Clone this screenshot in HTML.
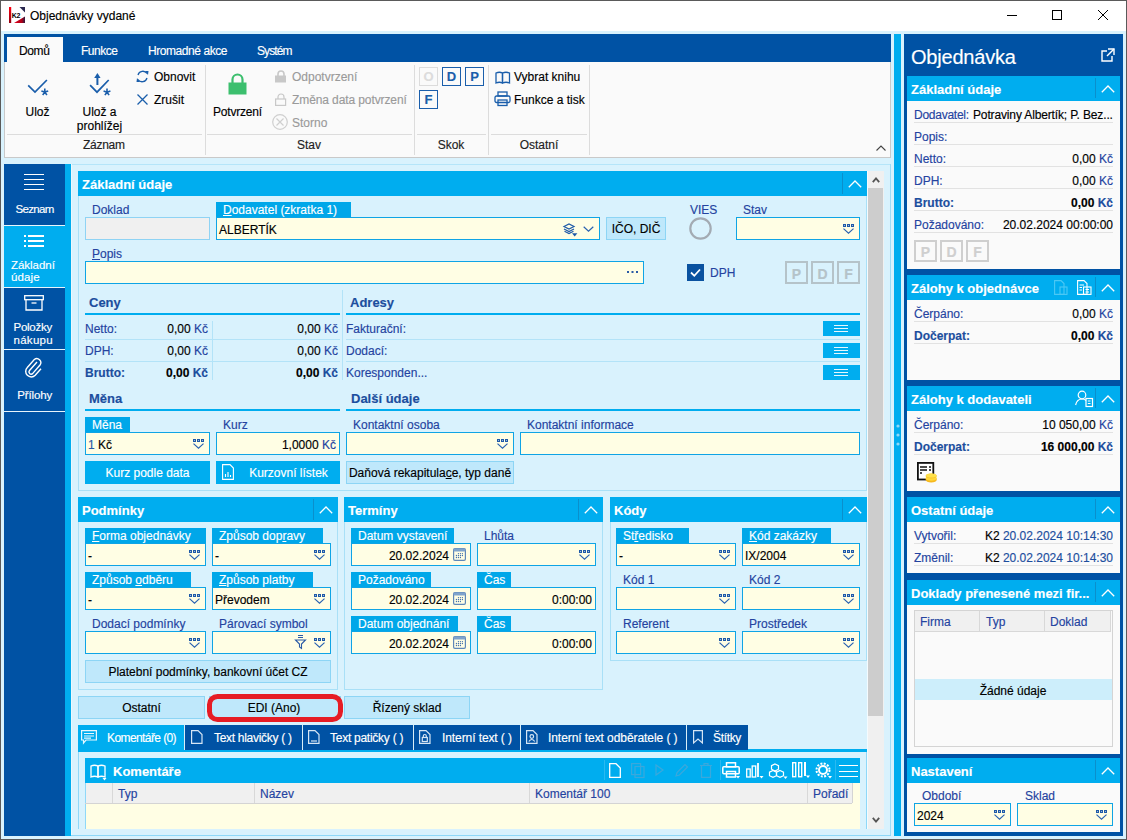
<!DOCTYPE html>
<html><head><meta charset="utf-8">
<style>
*{box-sizing:border-box;margin:0;padding:0}
html,body{width:1127px;height:840px;overflow:hidden;background:#d9f2fd;font-family:"Liberation Sans",sans-serif;font-size:12px;color:#000}
.a{position:absolute}
.t{position:absolute;white-space:nowrap;line-height:14px;-webkit-text-stroke:0.15px currentColor}
.lb{color:#2443a0}
.w{color:#fff}
.g{color:#9a9a9a}
.db{color:#1c4e9e}
svg.a{overflow:visible}
</style></head><body>

<div class="a" style="left:0px;top:0px;width:1127px;height:840px;background:#d9f2fd;"></div>
<div class="a" style="left:1px;top:1px;width:1125px;height:30px;background:#ffffff;"></div>
<div class="a" style="left:0px;top:0px;width:1127px;height:1px;background:#5a5a5a;"></div>
<div class="a" style="left:0px;top:0px;width:1px;height:840px;background:#5a5a5a;"></div>
<div class="a" style="left:1126px;top:0px;width:1px;height:840px;background:#5a5a5a;"></div>
<div class="a" style="left:0px;top:839px;width:1127px;height:1px;background:#5a5a5a;"></div>
<svg class="a" style="left:9px;top:7px;" width="16" height="16" viewBox="0 0 16 16"><defs><linearGradient id="rg" x1="0" y1="0" x2="0" y2="1"><stop offset="0" stop-color="#ff0010"/><stop offset="1" stop-color="#900010"/></linearGradient><linearGradient id="bg2" x1="0" y1="0" x2="1" y2="0"><stop offset="0" stop-color="#e0001a"/><stop offset="0.7" stop-color="#b00018"/><stop offset="1" stop-color="#2a1a40"/></linearGradient></defs><rect x="0" y="0" width="16" height="16" fill="#fff"/><rect x="0" y="0" width="2.2" height="16" fill="url(#rg)"/><path d="M10.5 0 L16 0 L16 5.5 Z" fill="#2b2850"/><path d="M5 16 L16 16 L16 9.5 Z" fill="url(#bg2)"/><text x="2.8" y="11" font-size="7" font-weight="bold" font-family="Liberation Sans" fill="#000" letter-spacing="-0.3">K2</text></svg>
<div class="t " style="left:30px;top:8.8px;font-size:12px;">Objednávky vydané</div>
<div class="a" style="left:1007px;top:15px;width:10px;height:1px;background:#000;"></div>
<div class="a" style="left:1052px;top:10px;width:10px;height:10px;border:1px solid #000;"></div>
<svg class="a" style="left:1098px;top:10px;" width="10" height="10" viewBox="0 0 10 10"><path d="M0 0 L10 10 M10 0 L0 10" stroke="#000" stroke-width="1"/></svg>
<div class="a" style="left:4px;top:34px;width:887px;height:124px;background:#fafafa;border:1px solid #c9c9c9;border-top:none;"></div>
<div class="a" style="left:4px;top:34px;width:887px;height:28px;background:#0052a4;"></div>
<div class="a" style="left:7px;top:37px;width:56px;height:25px;background:#fafafa;"></div>
<div class="t " style="left:19px;top:43.8px;font-size:12px;letter-spacing:-0.4px">Domů</div>
<div class="t w" style="left:81px;top:43.8px;font-size:12px;letter-spacing:-0.5px">Funkce</div>
<div class="t w" style="left:148px;top:43.8px;font-size:12px;letter-spacing:-0.44px">Hromadné akce</div>
<div class="t w" style="left:257px;top:43.8px;font-size:12px;letter-spacing:-0.9px">Systém</div>
<div class="a" style="left:205px;top:65px;width:1px;height:90px;background:#dcdcdc;"></div>
<div class="a" style="left:414px;top:65px;width:1px;height:90px;background:#dcdcdc;"></div>
<div class="a" style="left:488px;top:65px;width:1px;height:90px;background:#dcdcdc;"></div>
<div class="a" style="left:589px;top:65px;width:1px;height:90px;background:#dcdcdc;"></div>
<div class="a" style="left:7px;top:134px;width:195px;height:1px;background:#dcdcdc;"></div>
<div class="a" style="left:207px;top:134px;width:205px;height:1px;background:#dcdcdc;"></div>
<div class="a" style="left:417px;top:134px;width:69px;height:1px;background:#dcdcdc;"></div>
<div class="a" style="left:491px;top:134px;width:96px;height:1px;background:#dcdcdc;"></div>
<div class="t " style="left:83px;top:137.8px;font-size:12px;color:#222;letter-spacing:-0.28px">Záznam</div>
<div class="t " style="left:159.0px;width:300px;text-align:center;top:137.8px;font-size:12px;color:#222;">Stav</div>
<div class="t " style="left:301.0px;width:300px;text-align:center;top:137.8px;font-size:12px;color:#222;">Skok</div>
<div class="t " style="left:389.0px;width:300px;text-align:center;top:137.8px;font-size:12px;color:#222;">Ostatní</div>
<svg class="a" style="left:27px;top:78px;" width="22" height="20" viewBox="0 0 22 20"><path d="M1.2 7.4 L8 14 L19.9 2" fill="none" stroke="#1a5eab" stroke-width="1.7"/><path d="M17.80 14.10 L17.80 10.50 M17.80 14.10 L21.22 12.99 M17.80 14.10 L19.92 17.01 M17.80 14.10 L15.68 17.01 M17.80 14.10 L14.38 12.99 " stroke="#1a5eab" stroke-width="1.6"/></svg>
<div class="t " style="left:-112.5px;width:300px;text-align:center;top:104.8px;font-size:12px;">Ulož</div>
<svg class="a" style="left:88px;top:70px;" width="24" height="28" viewBox="0 0 24 28"><path d="M9.4 7 V15" stroke="#1a5eab" stroke-width="2"/><path d="M6.2 8 L9.4 3 L12.6 8 Z" fill="#1a5eab"/><path d="M2.1 15.1 L9 22.2 L20.7 10" fill="none" stroke="#1a5eab" stroke-width="1.7"/><path d="M19.00 22.20 L19.00 18.60 M19.00 22.20 L22.42 21.09 M19.00 22.20 L21.12 25.11 M19.00 22.20 L16.88 25.11 M19.00 22.20 L15.58 21.09 " stroke="#1a5eab" stroke-width="1.6"/></svg>
<div class="t " style="left:-50.5px;width:300px;text-align:center;top:104.8px;font-size:12px;">Ulož a</div>
<div class="t " style="left:-50.5px;width:300px;text-align:center;top:118.8px;font-size:12px;">prohlížej</div>
<svg class="a" style="left:136px;top:70px;" width="13" height="13" viewBox="0 0 13 13"><g fill="none" stroke="#1a5eab" stroke-width="1.3"><path d="M2 5 A5 5 0 0 1 11 3.5"/><path d="M11 8 A5 5 0 0 1 2 9.5"/></g><path d="M9 1 L12.5 1 L12 5 Z" fill="#1a5eab"/><path d="M4 12 L0.5 12 L1 8 Z" fill="#1a5eab"/></svg>
<div class="t " style="left:154px;top:69.8px;font-size:12px;">Obnovit</div>
<svg class="a" style="left:137px;top:94px;" width="11" height="11" viewBox="0 0 11 11"><path d="M0.5 0.5 L10.5 10.5 M10.5 0.5 L0.5 10.5" stroke="#1a5eab" stroke-width="1.3"/></svg>
<div class="t " style="left:154px;top:92.8px;font-size:12px;">Zrušit</div>
<svg class="a" style="left:228px;top:74px;" width="19" height="21" viewBox="0 0 19 21"><path d="M4.5 9 V5.5 A5 5 0 0 1 14.5 5.5 V9" fill="none" stroke="#3cbf6e" stroke-width="2.2"/><rect x="0.5" y="8.5" width="18" height="12" fill="#3cbf6e"/></svg>
<div class="t " style="left:213px;top:104.8px;font-size:12px;letter-spacing:-0.19px">Potvrzení</div>
<svg class="a" style="left:275px;top:70px;" width="12" height="13" viewBox="0 0 12 13"><path d="M3 6 V4 A3 3 0 0 1 9 4 V6" fill="none" stroke="#c8c8c8" stroke-width="1.6"/><rect x="0" y="5.5" width="11" height="7" fill="#c8c8c8"/></svg>
<div class="t g" style="left:292px;top:69.8px;font-size:12px;">Odpotvrzení</div>
<svg class="a" style="left:275px;top:93px;" width="12" height="13" viewBox="0 0 12 13"><path d="M3 6 V4 A3 3 0 0 1 9 4 V6" fill="none" stroke="#c8c8c8" stroke-width="1.2"/><rect x="0.6" y="6" width="10" height="6.4" fill="none" stroke="#c8c8c8" stroke-width="1.2"/></svg>
<div class="t g" style="left:292px;top:92.8px;font-size:12px;letter-spacing:-0.1px">Změna data potvrzení</div>
<svg class="a" style="left:272px;top:114px;" width="17" height="17" viewBox="0 0 17 17"><circle cx="8" cy="8" r="7.3" fill="none" stroke="#cfcfcf" stroke-width="1.2"/><path d="M4.5 4.5 L11.5 11.5 M11.5 4.5 L4.5 11.5" stroke="#cfcfcf" stroke-width="1.2"/></svg>
<div class="t g" style="left:292px;top:115.8px;font-size:12px;">Storno</div>
<div class="a" style="left:419px;top:67px;width:19px;height:19px;border:1px solid #dcdcdc;"></div>
<div class="t " style="left:278.5px;width:300px;text-align:center;top:70.0px;font-size:13px;font-weight:bold;color:#dcdcdc;">O</div>
<div class="a" style="left:442px;top:67px;width:19px;height:19px;border:1.5px solid #1a5eab;"></div>
<div class="t " style="left:301.5px;width:300px;text-align:center;top:70.0px;font-size:13px;font-weight:bold;color:#1a5eab;">D</div>
<div class="a" style="left:465px;top:67px;width:19px;height:19px;border:1.5px solid #1a5eab;"></div>
<div class="t " style="left:324.5px;width:300px;text-align:center;top:70.0px;font-size:13px;font-weight:bold;color:#1a5eab;">P</div>
<div class="a" style="left:419px;top:90px;width:19px;height:19px;border:1.5px solid #1a5eab;"></div>
<div class="t " style="left:278.5px;width:300px;text-align:center;top:93.0px;font-size:13px;font-weight:bold;color:#1a5eab;">F</div>
<svg class="a" style="left:495px;top:71px;" width="16" height="13" viewBox="0 0 16 13"><g fill="none" stroke="#1a5eab" stroke-width="1.3"><path d="M1 2 Q4.5 0.5 7.5 2 V12 Q4.5 10.5 1 12 Z"/><path d="M7.5 2 Q11 0.5 14.5 2 V12 Q11 10.5 7.5 12 Z"/></g></svg>
<div class="t " style="left:514px;top:69.8px;font-size:12px;">Vybrat knihu</div>
<svg class="a" style="left:494px;top:91px;" width="17" height="16" viewBox="0 0 17 16"><g fill="none" stroke="#1a5eab" stroke-width="1.3"><rect x="4" y="1" width="9" height="4"/><rect x="1" y="5" width="15" height="6.5" rx="1.5"/><rect x="4" y="9" width="9" height="5.5"/></g></svg>
<div class="t " style="left:514px;top:92.8px;font-size:12px;">Funkce a tisk</div>
<svg class="a" style="left:876px;top:145px;" width="10" height="6" viewBox="0 0 10 6"><path d="M0.5 5.5 L5 1 L9.5 5.5" fill="none" stroke="#444" stroke-width="1.1"/></svg>
<div class="a" style="left:894px;top:34px;width:7px;height:802px;background:#00adef;"></div>
<svg class="a" style="left:896px;top:424px;" width="4" height="4" viewBox="0 0 4 4"><circle cx="2" cy="2" r="1.6" fill="#8fd8f8"/></svg>
<svg class="a" style="left:896px;top:433px;" width="4" height="4" viewBox="0 0 4 4"><circle cx="2" cy="2" r="1.6" fill="#8fd8f8"/></svg>
<svg class="a" style="left:896px;top:442px;" width="4" height="4" viewBox="0 0 4 4"><circle cx="2" cy="2" r="1.6" fill="#8fd8f8"/></svg>
<div class="a" style="left:904px;top:34px;width:219px;height:802px;background:#0052a4;"></div>
<div class="t w" style="left:911px;top:50.1px;font-size:20px;letter-spacing:-0.2px">Objednávka</div>
<svg class="a" style="left:1101px;top:48px;" width="14" height="14" viewBox="0 0 14 14"><g fill="none" stroke="#fff" stroke-width="1.4"><path d="M6 3 H1 V13 H11 V8"/><path d="M7 1 H13 V7"/><path d="M13 1 L6 8"/></g></svg>
<div class="a" style="left:4px;top:164px;width:61px;height:672px;background:#0052a4;"></div>
<div class="a" style="left:65px;top:164px;width:6px;height:672px;background:#00adef;"></div>
<div class="a" style="left:4px;top:226px;width:67px;height:61px;background:#00adef;"></div>
<div class="a" style="left:4px;top:225px;width:61px;height:1px;background:#e8f4fb;"></div>
<div class="a" style="left:4px;top:287px;width:61px;height:1px;background:#e8f4fb;"></div>
<div class="a" style="left:4px;top:349px;width:61px;height:1px;background:#e8f4fb;"></div>
<div class="a" style="left:4px;top:411px;width:61px;height:1px;background:#e8f4fb;"></div>
<div class="a" style="left:24px;top:174px;width:20px;height:1px;background:#fff;"></div>
<div class="a" style="left:24px;top:179px;width:20px;height:1px;background:#fff;"></div>
<div class="a" style="left:24px;top:184px;width:20px;height:1px;background:#fff;"></div>
<div class="a" style="left:24px;top:189px;width:20px;height:1px;background:#fff;"></div>
<div class="t w" style="left:15.5px;top:202.0px;font-size:11.5px;letter-spacing:-0.67px">Seznam</div>
<div class="a" style="left:24px;top:235px;width:1.5px;height:1.5px;background:#fff;"></div>
<div class="a" style="left:28px;top:235px;width:16px;height:1.5px;background:#fff;"></div>
<div class="a" style="left:24px;top:240px;width:1.5px;height:1.5px;background:#fff;"></div>
<div class="a" style="left:28px;top:240px;width:16px;height:1.5px;background:#fff;"></div>
<div class="a" style="left:24px;top:245px;width:1.5px;height:1.5px;background:#fff;"></div>
<div class="a" style="left:28px;top:245px;width:16px;height:1.5px;background:#fff;"></div>
<div class="t w" style="left:11px;top:258.0px;font-size:11.5px;letter-spacing:-0.03px">Základní</div>
<div class="t w" style="left:11px;top:270.0px;font-size:11.5px;letter-spacing:0.13px">údaje</div>
<svg class="a" style="left:24px;top:295px;" width="20" height="16" viewBox="0 0 20 16"><g fill="none" stroke="#fff" stroke-width="1.3"><rect x="0.7" y="0.7" width="18.6" height="4"/><path d="M2 4.7 V15 H18 V4.7"/><path d="M7.5 8 H12.5"/></g></svg>
<div class="t w" style="left:13.5px;top:320.0px;font-size:11.5px;letter-spacing:-0.26px">Položky</div>
<div class="t w" style="left:13.5px;top:333.0px;font-size:11.5px;letter-spacing:0.28px">nákupu</div>
<svg class="a" style="left:25px;top:358px;" width="18" height="20" viewBox="0 0 18 20"><path d="M12 4 L4.5 12.5 A2.2 2.2 0 0 0 7.6 15.6 L15 7 A4 4 0 0 0 9.3 1.5 L2.3 9.5 A5.5 5.5 0 0 0 10.2 17.3 L16 10.8" fill="none" stroke="#fff" stroke-width="1.4"/></svg>
<div class="t w" style="left:17.3px;top:388.0px;font-size:11.5px;letter-spacing:-0.14px">Přílohy</div>
<div class="a" style="left:71px;top:164px;width:820px;height:672px;background:#d9f2fd;"></div>
<div class="a" style="left:71px;top:164px;width:820px;height:1px;background:#b5e5f9;"></div>
<div class="a" style="left:890px;top:164px;width:1px;height:672px;background:#9edcf6;"></div>
<div class="a" style="left:71px;top:835px;width:820px;height:1px;background:#8fd8f8;"></div>
<div class="a" style="left:71px;top:164px;width:1px;height:671px;background:#eaf8fe;"></div>
<div class="a" style="left:867px;top:171px;width:1px;height:658px;background:#f4fbfe;"></div>
<div class="a" style="left:868px;top:171px;width:16px;height:658px;background:#f0f0f0;"></div>
<div class="a" style="left:868px;top:188px;width:15px;height:528px;background:#cdcdcd;"></div>
<svg class="a" style="left:872px;top:177px;" width="8" height="6" viewBox="0 0 8 6"><path d="M0.8 5.2 L4 1.5 L7.2 5.2" fill="none" stroke="#555" stroke-width="1.8"/></svg>
<svg class="a" style="left:872px;top:817px;" width="8" height="6" viewBox="0 0 8 6"><path d="M0.8 0.8 L4 4.5 L7.2 0.8" fill="none" stroke="#555" stroke-width="1.8"/></svg>
<div class="a" style="left:78px;top:171px;width:789px;height:320px;border:1px solid #a9e0f7;"></div>
<div class="a" style="left:78px;top:171px;width:789px;height:25px;background:#00adef;"></div>
<div class="t w" style="left:82px;top:177.5px;font-size:13px;font-weight:bold;">Základní údaje</div>
<div class="a" style="left:842px;top:173px;width:1px;height:21px;background:#0a8fcc;"></div>
<svg class="a" style="left:848px;top:180px;" width="14" height="8" viewBox="0 0 14 8"><path d="M0.8 7.2 L7 1 L13.2 7.2" fill="none" stroke="#fff" stroke-width="1.3"/></svg>
<div class="t lb" style="left:92px;top:202.8px;font-size:12px;">Doklad</div>
<div class="a" style="left:85px;top:217px;width:125px;height:23px;background:#f0f0f0;border:1px solid #8fd3f4;"></div>
<div class="a" style="left:216px;top:202px;width:135px;height:15px;background:#00a7e9;"></div>
<div class="t w" style="left:223px;top:202.8px;font-size:12px;"><u>D</u>odavatel (zkratka 1)</div>
<div class="a" style="left:216px;top:217px;width:384px;height:23px;background:#fffee4;border:1px solid #0fa4e5;"></div>
<div class="t " style="left:219px;top:222.8px;font-size:12px;">ALBERTÍK</div>
<svg class="a" style="left:563px;top:223px;" width="15" height="14" viewBox="0 0 15 14"><g fill="none" stroke="#1f5aa8" stroke-width="1.2"><path d="M1 3.5 L6 1 L11 3.5 L6 6 Z"/><path d="M1 6 L6 8.5 L11 6"/><path d="M1.5 8.3 L6 10.5 L10.5 8.3"/></g><path d="M9 10.3 L14.4 10.3 L11.7 13.5 Z" fill="#1f5aa8"/></svg>
<svg class="a" style="left:583px;top:226px;" width="11" height="6" viewBox="0 0 11 6"><path d="M0.7 0.7 L5.5 5.2 L10.3 0.7" fill="none" stroke="#2a62b0" stroke-width="1.2"/></svg>
<div class="a" style="left:606px;top:217px;width:60px;height:23px;background:#bfe8fb;border:1px solid #8dd5f5;"></div>
<div class="t " style="left:486.0px;width:300px;text-align:center;top:221.8px;font-size:12px;">IČO, DIČ</div>
<div class="t lb" style="left:690px;top:202.8px;font-size:12px;">VIES</div>
<svg class="a" style="left:689px;top:217px;" width="23" height="23" viewBox="0 0 23 23"><circle cx="11.5" cy="11.5" r="10.2" fill="none" stroke="#a3abb3" stroke-width="2.2"/></svg>
<div class="t lb" style="left:743px;top:202.8px;font-size:12px;">Stav</div>
<div class="a" style="left:736px;top:217px;width:124px;height:23px;background:#fffee4;border:1px solid #0fa4e5;"></div>
<svg class="a" style="left:843px;top:224px;" width="12" height="10" viewBox="0 0 12 10"><g fill="#1f5aa8"><rect x="0" y="0" width="3" height="3"/><rect x="4" y="0" width="3" height="3"/><rect x="8" y="0" width="3" height="3"/></g><g fill="#9cb8dc"><rect x="1" y="1" width="1" height="1"/><rect x="5" y="1" width="1" height="1"/><rect x="9" y="1" width="1" height="1"/></g><path d="M0.5 4.6 L5.5 9.2 L10.5 4.6" fill="none" stroke="#2a62b0" stroke-width="1.15"/></svg>
<div class="t lb" style="left:92px;top:246.8px;font-size:12px;"><u>P</u>opis</div>
<div class="a" style="left:85px;top:261px;width:559px;height:23px;background:#fffee4;border:1px solid #0fa4e5;"></div>
<svg class="a" style="left:627px;top:271px;" width="12" height="3" viewBox="0 0 12 3"><g fill="#2a5aa6"><rect x="0" y="0" width="2" height="2"/><rect x="4.5" y="0" width="2" height="2"/><rect x="9" y="0" width="2" height="2"/></g></svg>
<div class="a" style="left:687px;top:264px;width:17px;height:17px;background:#0a52a0;"></div>
<svg class="a" style="left:689px;top:266px;" width="13" height="13" viewBox="0 0 13 13"><path d="M2 6.5 L5.3 9.8 L11 3.5" fill="none" stroke="#fff" stroke-width="1.8"/></svg>
<div class="t lb" style="left:710px;top:265.8px;font-size:12px;">DPH</div>
<div class="a" style="left:785px;top:261px;width:23px;height:23px;border:2px solid #b5c3c9;"></div>
<div class="t " style="left:646.5px;width:300px;text-align:center;top:267.1px;font-size:14px;font-weight:bold;color:#b5c3c9;">P</div>
<div class="a" style="left:811px;top:261px;width:23px;height:23px;border:2px solid #b5c3c9;"></div>
<div class="t " style="left:672.5px;width:300px;text-align:center;top:267.1px;font-size:14px;font-weight:bold;color:#b5c3c9;">D</div>
<div class="a" style="left:837px;top:261px;width:23px;height:23px;border:2px solid #b5c3c9;"></div>
<div class="t " style="left:698.5px;width:300px;text-align:center;top:267.1px;font-size:14px;font-weight:bold;color:#b5c3c9;">F</div>
<div class="t " style="left:89px;top:295.5px;font-size:13px;font-weight:bold;color:#1c4e9e;">Ceny</div>
<div class="a" style="left:85px;top:313px;width:255px;height:2px;background:#00adef;"></div>
<div class="a" style="left:85px;top:339px;width:255px;height:1px;background:#b3e3f8;"></div>
<div class="a" style="left:85px;top:361px;width:255px;height:1px;background:#b3e3f8;"></div>
<div class="a" style="left:212px;top:321px;width:1px;height:59px;background:#b3e3f8;"></div>
<div class="a" style="left:342px;top:290px;width:1px;height:90px;background:#b3e3f8;"></div>
<div class="t lb" style="left:85px;top:321.8px;font-size:12px;">Netto:</div>
<div class="t lb" style="left:85px;top:343.8px;font-size:12px;">DPH:</div>
<div class="t " style="left:85px;top:365.8px;font-size:12px;font-weight:bold;color:#1c4e9e;">Brutto:</div>
<div class="t " style="right:919px;top:321.8px;font-size:12px;"><span style="color:#000">0,00</span> <span style="color:#2443a0">Kč</span></div>
<div class="t " style="right:789px;top:321.8px;font-size:12px;"><span style="color:#000">0,00</span> <span style="color:#2443a0">Kč</span></div>
<div class="t " style="right:919px;top:343.8px;font-size:12px;"><span style="color:#000">0,00</span> <span style="color:#2443a0">Kč</span></div>
<div class="t " style="right:789px;top:343.8px;font-size:12px;"><span style="color:#000">0,00</span> <span style="color:#2443a0">Kč</span></div>
<div class="t " style="right:919px;top:365.8px;font-size:12px;font-weight:bold;"><span style="color:#000">0,00</span> <span style="color:#1c4e9e">Kč</span></div>
<div class="t " style="right:789px;top:365.8px;font-size:12px;font-weight:bold;"><span style="color:#000">0,00</span> <span style="color:#1c4e9e">Kč</span></div>
<div class="t " style="left:350px;top:295.5px;font-size:13px;font-weight:bold;color:#1c4e9e;">Adresy</div>
<div class="a" style="left:346px;top:313px;width:514px;height:2px;background:#00adef;"></div>
<div class="a" style="left:346px;top:339px;width:514px;height:1px;background:#b3e3f8;"></div>
<div class="a" style="left:346px;top:361px;width:514px;height:1px;background:#b3e3f8;"></div>
<div class="t lb" style="left:346px;top:321.8px;font-size:12px;">Fakturační:</div>
<div class="t lb" style="left:346px;top:343.8px;font-size:12px;">Dodací:</div>
<div class="t lb" style="left:346px;top:365.8px;font-size:12px;">Koresponden...</div>
<div class="a" style="left:823px;top:321px;width:37px;height:15px;background:#00adef;"></div>
<div class="a" style="left:834px;top:325px;width:14px;height:1px;background:#e6f7fe;"></div>
<div class="a" style="left:834px;top:328px;width:14px;height:1px;background:#e6f7fe;"></div>
<div class="a" style="left:834px;top:331px;width:14px;height:1px;background:#e6f7fe;"></div>
<div class="a" style="left:823px;top:343px;width:37px;height:15px;background:#00adef;"></div>
<div class="a" style="left:834px;top:347px;width:14px;height:1px;background:#e6f7fe;"></div>
<div class="a" style="left:834px;top:350px;width:14px;height:1px;background:#e6f7fe;"></div>
<div class="a" style="left:834px;top:353px;width:14px;height:1px;background:#e6f7fe;"></div>
<div class="a" style="left:823px;top:365px;width:37px;height:15px;background:#00adef;"></div>
<div class="a" style="left:834px;top:369px;width:14px;height:1px;background:#e6f7fe;"></div>
<div class="a" style="left:834px;top:372px;width:14px;height:1px;background:#e6f7fe;"></div>
<div class="a" style="left:834px;top:375px;width:14px;height:1px;background:#e6f7fe;"></div>
<div class="t " style="left:89px;top:391.5px;font-size:13px;font-weight:bold;color:#1c4e9e;">Měna</div>
<div class="a" style="left:85px;top:409px;width:255px;height:2px;background:#00adef;"></div>
<div class="a" style="left:85px;top:417px;width:45px;height:15px;background:#00a7e9;"></div>
<div class="t w" style="left:92px;top:417.8px;font-size:12px;">Měna</div>
<div class="a" style="left:85px;top:432px;width:125px;height:23px;background:#fffee4;border:1px solid #0fa4e5;"></div>
<div class="t " style="left:88px;top:437.8px;font-size:12px;"><span style="color:#2a5aa6">1</span> Kč</div>
<svg class="a" style="left:193px;top:439px;" width="12" height="10" viewBox="0 0 12 10"><g fill="#1f5aa8"><rect x="0" y="0" width="3" height="3"/><rect x="4" y="0" width="3" height="3"/><rect x="8" y="0" width="3" height="3"/></g><g fill="#9cb8dc"><rect x="1" y="1" width="1" height="1"/><rect x="5" y="1" width="1" height="1"/><rect x="9" y="1" width="1" height="1"/></g><path d="M0.5 4.6 L5.5 9.2 L10.5 4.6" fill="none" stroke="#2a62b0" stroke-width="1.15"/></svg>
<div class="t lb" style="left:223px;top:417.8px;font-size:12px;">Kurz</div>
<div class="a" style="left:216px;top:432px;width:124px;height:23px;background:#fffee4;border:1px solid #0fa4e5;"></div>
<div class="t " style="right:791px;top:437.8px;font-size:12px;">1,0000 <span style="color:#2443a0">Kč</span></div>
<div class="a" style="left:85px;top:461px;width:125px;height:23px;background:#00adef;"></div>
<div class="t w" style="left:-2.5px;width:300px;text-align:center;top:465.8px;font-size:12px;">Kurz podle data</div>
<div class="a" style="left:216px;top:461px;width:124px;height:23px;background:#00adef;"></div>
<svg class="a" style="left:222px;top:464px;" width="12" height="16" viewBox="0 0 12 16"><g fill="none" stroke="#fff" stroke-width="1.1"><path d="M0.6 0.6 H8 L11.4 4 V15.4 H0.6 Z"/><path d="M3.5 13 V10 M6 13 V8 M8.5 13 V11"/></g></svg>
<div class="t w" style="left:138.5px;width:300px;text-align:center;top:465.8px;font-size:12px;">Kurzovní lístek</div>
<div class="t " style="left:351px;top:391.5px;font-size:13px;font-weight:bold;color:#1c4e9e;">Další údaje</div>
<div class="a" style="left:346px;top:409px;width:514px;height:2px;background:#00adef;"></div>
<div class="t lb" style="left:353px;top:417.8px;font-size:12px;">Kontaktní osoba</div>
<div class="a" style="left:346px;top:432px;width:168px;height:23px;background:#fffee4;border:1px solid #0fa4e5;"></div>
<svg class="a" style="left:497px;top:439px;" width="12" height="10" viewBox="0 0 12 10"><g fill="#1f5aa8"><rect x="0" y="0" width="3" height="3"/><rect x="4" y="0" width="3" height="3"/><rect x="8" y="0" width="3" height="3"/></g><g fill="#9cb8dc"><rect x="1" y="1" width="1" height="1"/><rect x="5" y="1" width="1" height="1"/><rect x="9" y="1" width="1" height="1"/></g><path d="M0.5 4.6 L5.5 9.2 L10.5 4.6" fill="none" stroke="#2a62b0" stroke-width="1.15"/></svg>
<div class="t lb" style="left:527px;top:417.8px;font-size:12px;">Kontaktní informace</div>
<div class="a" style="left:520px;top:432px;width:340px;height:23px;background:#fffee4;border:1px solid #0fa4e5;"></div>
<div class="a" style="left:346px;top:461px;width:168px;height:23px;background:#bfe8fb;border:1px solid #8dd5f5;"></div>
<div class="t " style="left:280.0px;width:300px;text-align:center;top:465.8px;font-size:12px;">Daňová rekapitula<u>c</u>e, typ daně</div>
<div class="a" style="left:78px;top:497px;width:260px;height:193px;border:1px solid #a9e0f7;"></div>
<div class="a" style="left:78px;top:497px;width:260px;height:25px;background:#00adef;"></div>
<div class="t w" style="left:82px;top:503.5px;font-size:13px;font-weight:bold;">Podmínky</div>
<div class="a" style="left:313px;top:499px;width:1px;height:21px;background:#0a8fcc;"></div>
<svg class="a" style="left:319px;top:506px;" width="14" height="8" viewBox="0 0 14 8"><path d="M0.8 7.2 L7 1 L13.2 7.2" fill="none" stroke="#fff" stroke-width="1.3"/></svg>
<div class="a" style="left:85px;top:528px;width:121px;height:15px;background:#00a7e9;"></div>
<div class="t w" style="left:92px;top:528.8px;font-size:12px;"><u>F</u>orma objednávky</div>
<div class="a" style="left:85px;top:543px;width:121px;height:23px;background:#fffee4;border:1px solid #0fa4e5;"></div>
<div class="t " style="left:88px;top:548.8px;font-size:12px;">-</div>
<svg class="a" style="left:189px;top:550px;" width="12" height="10" viewBox="0 0 12 10"><g fill="#1f5aa8"><rect x="0" y="0" width="3" height="3"/><rect x="4" y="0" width="3" height="3"/><rect x="8" y="0" width="3" height="3"/></g><g fill="#9cb8dc"><rect x="1" y="1" width="1" height="1"/><rect x="5" y="1" width="1" height="1"/><rect x="9" y="1" width="1" height="1"/></g><path d="M0.5 4.6 L5.5 9.2 L10.5 4.6" fill="none" stroke="#2a62b0" stroke-width="1.15"/></svg>
<div class="a" style="left:212px;top:528px;width:111px;height:15px;background:#00a7e9;"></div>
<div class="t w" style="left:219px;top:528.8px;font-size:12px;">Způsob dop<u>r</u>avy</div>
<div class="a" style="left:212px;top:543px;width:119px;height:23px;background:#fffee4;border:1px solid #0fa4e5;"></div>
<div class="t " style="left:215px;top:548.8px;font-size:12px;">-</div>
<svg class="a" style="left:314px;top:550px;" width="12" height="10" viewBox="0 0 12 10"><g fill="#1f5aa8"><rect x="0" y="0" width="3" height="3"/><rect x="4" y="0" width="3" height="3"/><rect x="8" y="0" width="3" height="3"/></g><g fill="#9cb8dc"><rect x="1" y="1" width="1" height="1"/><rect x="5" y="1" width="1" height="1"/><rect x="9" y="1" width="1" height="1"/></g><path d="M0.5 4.6 L5.5 9.2 L10.5 4.6" fill="none" stroke="#2a62b0" stroke-width="1.15"/></svg>
<div class="a" style="left:85px;top:572px;width:106px;height:15px;background:#00a7e9;"></div>
<div class="t w" style="left:92px;top:572.8px;font-size:12px;">Způsob <u>o</u>dběru</div>
<div class="a" style="left:85px;top:587px;width:121px;height:23px;background:#fffee4;border:1px solid #0fa4e5;"></div>
<div class="t " style="left:88px;top:592.8px;font-size:12px;">-</div>
<svg class="a" style="left:189px;top:594px;" width="12" height="10" viewBox="0 0 12 10"><g fill="#1f5aa8"><rect x="0" y="0" width="3" height="3"/><rect x="4" y="0" width="3" height="3"/><rect x="8" y="0" width="3" height="3"/></g><g fill="#9cb8dc"><rect x="1" y="1" width="1" height="1"/><rect x="5" y="1" width="1" height="1"/><rect x="9" y="1" width="1" height="1"/></g><path d="M0.5 4.6 L5.5 9.2 L10.5 4.6" fill="none" stroke="#2a62b0" stroke-width="1.15"/></svg>
<div class="a" style="left:212px;top:572px;width:101px;height:15px;background:#00a7e9;"></div>
<div class="t w" style="left:219px;top:572.8px;font-size:12px;"><u>Z</u>působ platby</div>
<div class="a" style="left:212px;top:587px;width:119px;height:23px;background:#fffee4;border:1px solid #0fa4e5;"></div>
<div class="t " style="left:215px;top:592.8px;font-size:12px;">Převodem</div>
<svg class="a" style="left:314px;top:594px;" width="12" height="10" viewBox="0 0 12 10"><g fill="#1f5aa8"><rect x="0" y="0" width="3" height="3"/><rect x="4" y="0" width="3" height="3"/><rect x="8" y="0" width="3" height="3"/></g><g fill="#9cb8dc"><rect x="1" y="1" width="1" height="1"/><rect x="5" y="1" width="1" height="1"/><rect x="9" y="1" width="1" height="1"/></g><path d="M0.5 4.6 L5.5 9.2 L10.5 4.6" fill="none" stroke="#2a62b0" stroke-width="1.15"/></svg>
<div class="t lb" style="left:92px;top:616.8px;font-size:12px;">Dodací podmínky</div>
<div class="a" style="left:85px;top:631px;width:121px;height:23px;background:#fffee4;border:1px solid #0fa4e5;"></div>
<svg class="a" style="left:189px;top:638px;" width="12" height="10" viewBox="0 0 12 10"><g fill="#1f5aa8"><rect x="0" y="0" width="3" height="3"/><rect x="4" y="0" width="3" height="3"/><rect x="8" y="0" width="3" height="3"/></g><g fill="#9cb8dc"><rect x="1" y="1" width="1" height="1"/><rect x="5" y="1" width="1" height="1"/><rect x="9" y="1" width="1" height="1"/></g><path d="M0.5 4.6 L5.5 9.2 L10.5 4.6" fill="none" stroke="#2a62b0" stroke-width="1.15"/></svg>
<div class="t lb" style="left:219px;top:616.8px;font-size:12px;">Párovací symbol</div>
<div class="a" style="left:212px;top:631px;width:119px;height:23px;background:#fffee4;border:1px solid #0fa4e5;"></div>
<svg class="a" style="left:314px;top:638px;" width="12" height="10" viewBox="0 0 12 10"><g fill="#1f5aa8"><rect x="0" y="0" width="3" height="3"/><rect x="4" y="0" width="3" height="3"/><rect x="8" y="0" width="3" height="3"/></g><g fill="#9cb8dc"><rect x="1" y="1" width="1" height="1"/><rect x="5" y="1" width="1" height="1"/><rect x="9" y="1" width="1" height="1"/></g><path d="M0.5 4.6 L5.5 9.2 L10.5 4.6" fill="none" stroke="#2a62b0" stroke-width="1.15"/></svg>
<svg class="a" style="left:295px;top:635px;" width="11" height="14" viewBox="0 0 11 14"><g fill="none" stroke="#2a5aa6" stroke-width="1.1"><path d="M3 0.5 H8 M3 2.5 H8"/><path d="M0.5 5 H10.5 L6.5 9 V13.5 L4.5 12 V9 Z"/></g></svg>
<div class="a" style="left:85px;top:660px;width:246px;height:23px;background:#bfe8fb;border:1px solid #8dd5f5;"></div>
<div class="t " style="left:58.0px;width:300px;text-align:center;top:664.8px;font-size:12px;">Platební podmínky, bankovní účet CZ</div>
<div class="a" style="left:344px;top:497px;width:259px;height:193px;border:1px solid #a9e0f7;"></div>
<div class="a" style="left:344px;top:497px;width:259px;height:25px;background:#00adef;"></div>
<div class="t w" style="left:348px;top:503.5px;font-size:13px;font-weight:bold;">Termíny</div>
<div class="a" style="left:578px;top:499px;width:1px;height:21px;background:#0a8fcc;"></div>
<svg class="a" style="left:584px;top:506px;" width="14" height="8" viewBox="0 0 14 8"><path d="M0.8 7.2 L7 1 L13.2 7.2" fill="none" stroke="#fff" stroke-width="1.3"/></svg>
<div class="a" style="left:351px;top:528px;width:103px;height:15px;background:#00a7e9;"></div>
<div class="t w" style="left:358px;top:528.8px;font-size:12px;">Datum vystavení</div>
<div class="a" style="left:351px;top:543px;width:120px;height:23px;background:#fffee4;border:1px solid #0fa4e5;"></div>
<div class="t " style="right:678px;top:548.8px;font-size:12px;">20.02.2024</div>
<svg class="a" style="left:453px;top:548px;" width="13" height="13" viewBox="0 0 13 13"><rect x="0.6" y="0.6" width="11.8" height="11.8" rx="1.3" fill="none" stroke="#5f88b8" stroke-width="1.2"/><rect x="0.6" y="0.6" width="11.8" height="3" rx="1" fill="#7fa3cc"/><g fill="#3f6faa"><circle cx="5.4" cy="5.6" r="0.65"/><circle cx="7.4" cy="5.6" r="0.65"/><circle cx="9.4" cy="5.6" r="0.65"/><circle cx="3.4" cy="7.5" r="0.65"/><circle cx="5.4" cy="7.5" r="0.65"/><circle cx="7.4" cy="7.5" r="0.65"/><circle cx="9.4" cy="7.5" r="0.65"/><circle cx="3.4" cy="9.5" r="0.65"/><circle cx="5.4" cy="9.5" r="0.65"/><circle cx="7.4" cy="9.5" r="0.65"/></g></svg>
<div class="t lb" style="left:484px;top:528.8px;font-size:12px;">Lhůta</div>
<div class="a" style="left:477px;top:543px;width:119px;height:23px;background:#fffee4;border:1px solid #0fa4e5;"></div>
<svg class="a" style="left:579px;top:550px;" width="12" height="10" viewBox="0 0 12 10"><g fill="#1f5aa8"><rect x="0" y="0" width="3" height="3"/><rect x="4" y="0" width="3" height="3"/><rect x="8" y="0" width="3" height="3"/></g><g fill="#9cb8dc"><rect x="1" y="1" width="1" height="1"/><rect x="5" y="1" width="1" height="1"/><rect x="9" y="1" width="1" height="1"/></g><path d="M0.5 4.6 L5.5 9.2 L10.5 4.6" fill="none" stroke="#2a62b0" stroke-width="1.15"/></svg>
<div class="a" style="left:351px;top:572px;width:80px;height:15px;background:#00a7e9;"></div>
<div class="t w" style="left:358px;top:572.8px;font-size:12px;">Požadováno</div>
<div class="a" style="left:351px;top:587px;width:120px;height:23px;background:#fffee4;border:1px solid #0fa4e5;"></div>
<div class="t " style="right:678px;top:592.8px;font-size:12px;">20.02.2024</div>
<svg class="a" style="left:453px;top:592px;" width="13" height="13" viewBox="0 0 13 13"><rect x="0.6" y="0.6" width="11.8" height="11.8" rx="1.3" fill="none" stroke="#5f88b8" stroke-width="1.2"/><rect x="0.6" y="0.6" width="11.8" height="3" rx="1" fill="#7fa3cc"/><g fill="#3f6faa"><circle cx="5.4" cy="5.6" r="0.65"/><circle cx="7.4" cy="5.6" r="0.65"/><circle cx="9.4" cy="5.6" r="0.65"/><circle cx="3.4" cy="7.5" r="0.65"/><circle cx="5.4" cy="7.5" r="0.65"/><circle cx="7.4" cy="7.5" r="0.65"/><circle cx="9.4" cy="7.5" r="0.65"/><circle cx="3.4" cy="9.5" r="0.65"/><circle cx="5.4" cy="9.5" r="0.65"/><circle cx="7.4" cy="9.5" r="0.65"/></g></svg>
<div class="a" style="left:477px;top:572px;width:34px;height:15px;background:#00a7e9;"></div>
<div class="t w" style="left:484px;top:572.8px;font-size:12px;">Čas</div>
<div class="a" style="left:477px;top:587px;width:119px;height:23px;background:#fffee4;border:1px solid #0fa4e5;"></div>
<div class="t " style="right:535px;top:592.8px;font-size:12px;">0:00:00</div>
<div class="a" style="left:351px;top:616px;width:107px;height:15px;background:#00a7e9;"></div>
<div class="t w" style="left:358px;top:616.8px;font-size:12px;">Datum objednání</div>
<div class="a" style="left:351px;top:631px;width:120px;height:23px;background:#fffee4;border:1px solid #0fa4e5;"></div>
<div class="t " style="right:678px;top:636.8px;font-size:12px;">20.02.2024</div>
<svg class="a" style="left:453px;top:636px;" width="13" height="13" viewBox="0 0 13 13"><rect x="0.6" y="0.6" width="11.8" height="11.8" rx="1.3" fill="none" stroke="#5f88b8" stroke-width="1.2"/><rect x="0.6" y="0.6" width="11.8" height="3" rx="1" fill="#7fa3cc"/><g fill="#3f6faa"><circle cx="5.4" cy="5.6" r="0.65"/><circle cx="7.4" cy="5.6" r="0.65"/><circle cx="9.4" cy="5.6" r="0.65"/><circle cx="3.4" cy="7.5" r="0.65"/><circle cx="5.4" cy="7.5" r="0.65"/><circle cx="7.4" cy="7.5" r="0.65"/><circle cx="9.4" cy="7.5" r="0.65"/><circle cx="3.4" cy="9.5" r="0.65"/><circle cx="5.4" cy="9.5" r="0.65"/><circle cx="7.4" cy="9.5" r="0.65"/></g></svg>
<div class="a" style="left:477px;top:616px;width:34px;height:15px;background:#00a7e9;"></div>
<div class="t w" style="left:484px;top:616.8px;font-size:12px;">Čas</div>
<div class="a" style="left:477px;top:631px;width:119px;height:23px;background:#fffee4;border:1px solid #0fa4e5;"></div>
<div class="t " style="right:535px;top:636.8px;font-size:12px;">0:00:00</div>
<div class="a" style="left:610px;top:497px;width:257px;height:164px;border:1px solid #a9e0f7;"></div>
<div class="a" style="left:610px;top:497px;width:257px;height:25px;background:#00adef;"></div>
<div class="t w" style="left:614px;top:503.5px;font-size:13px;font-weight:bold;">Kódy</div>
<div class="a" style="left:842px;top:499px;width:1px;height:21px;background:#0a8fcc;"></div>
<svg class="a" style="left:848px;top:506px;" width="14" height="8" viewBox="0 0 14 8"><path d="M0.8 7.2 L7 1 L13.2 7.2" fill="none" stroke="#fff" stroke-width="1.3"/></svg>
<div class="a" style="left:616px;top:528px;width:73px;height:15px;background:#00a7e9;"></div>
<div class="t w" style="left:623px;top:528.8px;font-size:12px;">St<u>ř</u>edisko</div>
<div class="a" style="left:616px;top:543px;width:120px;height:23px;background:#fffee4;border:1px solid #0fa4e5;"></div>
<div class="t " style="left:619px;top:548.8px;font-size:12px;">-</div>
<svg class="a" style="left:719px;top:550px;" width="12" height="10" viewBox="0 0 12 10"><g fill="#1f5aa8"><rect x="0" y="0" width="3" height="3"/><rect x="4" y="0" width="3" height="3"/><rect x="8" y="0" width="3" height="3"/></g><g fill="#9cb8dc"><rect x="1" y="1" width="1" height="1"/><rect x="5" y="1" width="1" height="1"/><rect x="9" y="1" width="1" height="1"/></g><path d="M0.5 4.6 L5.5 9.2 L10.5 4.6" fill="none" stroke="#2a62b0" stroke-width="1.15"/></svg>
<div class="a" style="left:742px;top:528px;width:89px;height:15px;background:#00a7e9;"></div>
<div class="t w" style="left:749px;top:528.8px;font-size:12px;"><u>K</u>ód zakázky</div>
<div class="a" style="left:742px;top:543px;width:118px;height:23px;background:#fffee4;border:1px solid #0fa4e5;"></div>
<div class="t " style="left:745px;top:548.8px;font-size:12px;">IX/2004</div>
<svg class="a" style="left:843px;top:550px;" width="12" height="10" viewBox="0 0 12 10"><g fill="#1f5aa8"><rect x="0" y="0" width="3" height="3"/><rect x="4" y="0" width="3" height="3"/><rect x="8" y="0" width="3" height="3"/></g><g fill="#9cb8dc"><rect x="1" y="1" width="1" height="1"/><rect x="5" y="1" width="1" height="1"/><rect x="9" y="1" width="1" height="1"/></g><path d="M0.5 4.6 L5.5 9.2 L10.5 4.6" fill="none" stroke="#2a62b0" stroke-width="1.15"/></svg>
<div class="t lb" style="left:623px;top:572.8px;font-size:12px;">Kód 1</div>
<div class="a" style="left:616px;top:587px;width:120px;height:23px;background:#fffee4;border:1px solid #0fa4e5;"></div>
<svg class="a" style="left:719px;top:594px;" width="12" height="10" viewBox="0 0 12 10"><g fill="#1f5aa8"><rect x="0" y="0" width="3" height="3"/><rect x="4" y="0" width="3" height="3"/><rect x="8" y="0" width="3" height="3"/></g><g fill="#9cb8dc"><rect x="1" y="1" width="1" height="1"/><rect x="5" y="1" width="1" height="1"/><rect x="9" y="1" width="1" height="1"/></g><path d="M0.5 4.6 L5.5 9.2 L10.5 4.6" fill="none" stroke="#2a62b0" stroke-width="1.15"/></svg>
<div class="t lb" style="left:749px;top:572.8px;font-size:12px;">Kód 2</div>
<div class="a" style="left:742px;top:587px;width:118px;height:23px;background:#fffee4;border:1px solid #0fa4e5;"></div>
<svg class="a" style="left:843px;top:594px;" width="12" height="10" viewBox="0 0 12 10"><g fill="#1f5aa8"><rect x="0" y="0" width="3" height="3"/><rect x="4" y="0" width="3" height="3"/><rect x="8" y="0" width="3" height="3"/></g><g fill="#9cb8dc"><rect x="1" y="1" width="1" height="1"/><rect x="5" y="1" width="1" height="1"/><rect x="9" y="1" width="1" height="1"/></g><path d="M0.5 4.6 L5.5 9.2 L10.5 4.6" fill="none" stroke="#2a62b0" stroke-width="1.15"/></svg>
<div class="t lb" style="left:623px;top:616.8px;font-size:12px;">Referent</div>
<div class="a" style="left:616px;top:631px;width:120px;height:23px;background:#fffee4;border:1px solid #0fa4e5;"></div>
<svg class="a" style="left:719px;top:638px;" width="12" height="10" viewBox="0 0 12 10"><g fill="#1f5aa8"><rect x="0" y="0" width="3" height="3"/><rect x="4" y="0" width="3" height="3"/><rect x="8" y="0" width="3" height="3"/></g><g fill="#9cb8dc"><rect x="1" y="1" width="1" height="1"/><rect x="5" y="1" width="1" height="1"/><rect x="9" y="1" width="1" height="1"/></g><path d="M0.5 4.6 L5.5 9.2 L10.5 4.6" fill="none" stroke="#2a62b0" stroke-width="1.15"/></svg>
<div class="t lb" style="left:749px;top:616.8px;font-size:12px;">Prostředek</div>
<div class="a" style="left:742px;top:631px;width:118px;height:23px;background:#fffee4;border:1px solid #0fa4e5;"></div>
<svg class="a" style="left:843px;top:638px;" width="12" height="10" viewBox="0 0 12 10"><g fill="#1f5aa8"><rect x="0" y="0" width="3" height="3"/><rect x="4" y="0" width="3" height="3"/><rect x="8" y="0" width="3" height="3"/></g><g fill="#9cb8dc"><rect x="1" y="1" width="1" height="1"/><rect x="5" y="1" width="1" height="1"/><rect x="9" y="1" width="1" height="1"/></g><path d="M0.5 4.6 L5.5 9.2 L10.5 4.6" fill="none" stroke="#2a62b0" stroke-width="1.15"/></svg>
<div class="a" style="left:78px;top:696px;width:127px;height:23px;background:#bfe8fb;border:1px solid #8dd5f5;"></div>
<div class="t " style="left:-8.5px;width:300px;text-align:center;top:700.8px;font-size:12px;">Ostatní</div>
<div class="a" style="left:209px;top:696px;width:132px;height:23px;background:#bfe8fb;border:1px solid #8dd5f5;"></div>
<div class="t " style="left:124.0px;width:300px;text-align:center;top:700.8px;font-size:12px;">EDI (Ano)</div>
<div class="a" style="left:344px;top:696px;width:126px;height:23px;background:#bfe8fb;border:1px solid #8dd5f5;"></div>
<div class="t " style="left:257.0px;width:300px;text-align:center;top:700.8px;font-size:12px;">Řízený sklad</div>
<svg class="a" style="left:207px;top:694px;" width="137" height="28" viewBox="0 0 137 28"><rect x="2.5" y="2.5" width="131" height="23" rx="8" ry="8" fill="none" stroke="#e61c24" stroke-width="5"/></svg>
<div class="a" style="left:78px;top:749px;width:789px;height:3px;background:#00adef;"></div>
<div class="a" style="left:78px;top:725px;width:106px;height:27px;background:#00adef;"></div>
<div class="a" style="left:185px;top:725px;width:117px;height:24.5px;background:#0052a4;"></div>
<div class="a" style="left:184px;top:725px;width:1px;height:24.5px;background:#d8eef8;"></div>
<div class="a" style="left:303px;top:725px;width:110px;height:24.5px;background:#0052a4;"></div>
<div class="a" style="left:302px;top:725px;width:1px;height:24.5px;background:#d8eef8;"></div>
<div class="a" style="left:414px;top:725px;width:106px;height:24.5px;background:#0052a4;"></div>
<div class="a" style="left:413px;top:725px;width:1px;height:24.5px;background:#d8eef8;"></div>
<div class="a" style="left:521px;top:725px;width:165px;height:24.5px;background:#0052a4;"></div>
<div class="a" style="left:520px;top:725px;width:1px;height:24.5px;background:#d8eef8;"></div>
<div class="a" style="left:687px;top:725px;width:61px;height:24.5px;background:#0052a4;"></div>
<div class="a" style="left:686px;top:725px;width:1px;height:24.5px;background:#d8eef8;"></div>
<svg class="a" style="left:81px;top:730px;" width="16" height="14" viewBox="0 0 16 14"><g fill="none" stroke="#e8f7fe" stroke-width="1.2"><path d="M0.6 0.6 H15.4 V10 H5 L2.5 13 V10 H0.6 Z"/><path d="M3 3.5 H13 M3 6 H13 M3 8.2 H10"/></g></svg>
<div class="t w" style="left:107px;top:730.8px;font-size:12px;letter-spacing:-0.59px">Komentáře (0)</div>
<svg class="a" style="left:191px;top:730px;" width="12" height="14" viewBox="0 0 12 14"><g fill="none" stroke="#d6e6f5" stroke-width="1.2"><path d="M0.6 0.6 H7 L11 4.6 V13.4 H0.6 Z"/></g></svg>
<div class="t w" style="left:214px;top:730.8px;font-size:12px;letter-spacing:-0.3px">Text hlavičky ( )</div>
<svg class="a" style="left:308px;top:730px;" width="12" height="14" viewBox="0 0 12 14"><g fill="none" stroke="#d6e6f5" stroke-width="1.2"><path d="M0.6 0.6 H7 L11 4.6 V13.4 H0.6 Z"/><path d="M3 11 H9"/></g></svg>
<div class="t w" style="left:330px;top:730.8px;font-size:12px;letter-spacing:-0.26px">Text patičky ( )</div>
<svg class="a" style="left:419px;top:730px;" width="12" height="14" viewBox="0 0 12 14"><g fill="none" stroke="#d6e6f5" stroke-width="1.2"><path d="M0.6 0.6 H7 L11 4.6 V13.4 H0.6 Z"/><rect x="3.3" y="7.5" width="5" height="4"/><path d="M4.3 7.5 V6 A1.5 1.5 0 0 1 7.3 6 V7.5"/></g></svg>
<div class="t w" style="left:442px;top:730.8px;font-size:12px;letter-spacing:-0.09px">Interní text ( )</div>
<svg class="a" style="left:526px;top:730px;" width="12" height="14" viewBox="0 0 12 14"><g fill="none" stroke="#d6e6f5" stroke-width="1.2"><path d="M0.6 0.6 H7 L11 4.6 V13.4 H0.6 Z"/><circle cx="5.8" cy="6.5" r="1.8"/><path d="M2.8 11.5 Q5.8 7.5 8.8 11.5"/></g></svg>
<div class="t w" style="left:548px;top:730.8px;font-size:12px;letter-spacing:-0.07px">Interní text odběratele ( )</div>
<svg class="a" style="left:693px;top:730px;" width="10" height="14" viewBox="0 0 10 14"><path d="M0.6 0.6 H9.4 V13 L5 9 L0.6 13 Z" fill="none" stroke="#d6e6f5" stroke-width="1.2"/></svg>
<div class="t w" style="left:713px;top:730.8px;font-size:12px;letter-spacing:-0.33px">Štítky</div>
<div class="a" style="left:78px;top:752px;width:789px;height:83px;background:#d9f2fd;"></div>
<div class="a" style="left:78px;top:752px;width:1px;height:77px;background:#8fd8f8;"></div>
<div class="a" style="left:866px;top:752px;width:1px;height:77px;background:#8fd8f8;"></div>
<div class="a" style="left:85px;top:758px;width:775px;height:25px;background:#00adef;"></div>
<svg class="a" style="left:90px;top:764px;" width="18" height="17" viewBox="0 0 18 17"><g fill="none" stroke="#fff" stroke-width="1.3"><path d="M1 2 Q4.5 0.5 8 2 V13 Q4.5 11.5 1 13 Z"/><path d="M8 2 Q11.5 0.5 15 2 V13 Q11.5 11.5 8 13 Z"/></g><path d="M12.5 14 L16.5 14 L14.5 16.5 Z" fill="#fff"/></svg>
<div class="t w" style="left:113px;top:764.5px;font-size:13px;font-weight:bold;">Komentáře</div>
<div class="a" style="left:85px;top:783px;width:775px;height:46px;background:#fffee4;"></div>
<div class="a" style="left:85px;top:783px;width:1px;height:46px;background:#8fd8f8;"></div>
<div class="a" style="left:86px;top:783px;width:766px;height:20px;background:#f0f0f0;"></div>
<div class="a" style="left:85px;top:803px;width:767px;height:1px;background:#d4d4d4;"></div>
<div class="a" style="left:112px;top:783px;width:1px;height:20px;background:#d8d8d8;"></div>
<div class="a" style="left:254px;top:783px;width:1px;height:20px;background:#d8d8d8;"></div>
<div class="a" style="left:529px;top:783px;width:1px;height:20px;background:#d8d8d8;"></div>
<div class="a" style="left:807px;top:783px;width:1px;height:20px;background:#d8d8d8;"></div>
<div class="a" style="left:852px;top:783px;width:1px;height:20px;background:#d4d4d4;"></div>
<div class="t lb" style="left:118px;top:786.8px;font-size:12px;">Typ</div>
<div class="t lb" style="left:260px;top:786.8px;font-size:12px;">Název</div>
<div class="t lb" style="left:535px;top:786.8px;font-size:12px;">Komentář 100</div>
<div class="t lb" style="left:813px;top:786.8px;font-size:12px;">Pořadí</div>
<div class="a" style="left:604px;top:760px;width:1px;height:20px;background:#2bb9f0;"></div>
<div class="a" style="left:720px;top:760px;width:1px;height:20px;background:#2bb9f0;"></div>
<div class="a" style="left:835px;top:760px;width:1px;height:20px;background:#2bb9f0;"></div>
<svg class="a" style="left:609px;top:763px;" width="12" height="15" viewBox="0 0 12 15"><path d="M0.7 0.7 H7 L11.3 5 V14.3 H0.7 Z" fill="none" stroke="#fff" stroke-width="1.3"/></svg>
<svg class="a" style="left:631px;top:763px;" width="14" height="15" viewBox="0 0 14 15"><g fill="none" stroke="#3aa8dc" stroke-width="1.2"><rect x="0.6" y="0.6" width="9" height="11"/><rect x="4" y="3.5" width="9" height="11"/></g></svg>
<svg class="a" style="left:655px;top:764px;" width="9" height="12" viewBox="0 0 9 12"><path d="M1 1 L8 6 L1 11 Z" fill="none" stroke="#3aa8dc" stroke-width="1.2"/></svg>
<svg class="a" style="left:675px;top:763px;" width="14" height="14" viewBox="0 0 14 14"><path d="M1 13 L2 9.5 L10 1.5 L12.5 4 L4.5 12 Z" fill="none" stroke="#3aa8dc" stroke-width="1.2"/></svg>
<svg class="a" style="left:700px;top:763px;" width="12" height="15" viewBox="0 0 12 15"><g fill="none" stroke="#3aa8dc" stroke-width="1.2"><path d="M0 2.5 H12 M4 2.5 V0.6 H8 V2.5"/><path d="M1.5 2.5 V14.4 H10.5 V2.5"/></g></svg>
<svg class="a" style="left:722px;top:762px;" width="19" height="17" viewBox="0 0 19 17"><g fill="none" stroke="#fff" stroke-width="1.5"><rect x="4.5" y="0.8" width="9" height="4"/><rect x="0.8" y="4.8" width="16.4" height="7" rx="1"/><rect x="4.5" y="9.5" width="9" height="5.5"/></g><path d="M14 14 L18 14 L16 16.5 Z" fill="#fff"/></svg>
<svg class="a" style="left:746px;top:763px;" width="18" height="16" viewBox="0 0 18 16"><g fill="none" stroke="#fff" stroke-width="1.3"><rect x="0.7" y="6" width="3.5" height="8"/><rect x="6.2" y="3" width="3.5" height="11"/></g><path d="M12 0 V14" stroke="#fff" stroke-width="1.8"/><path d="M13.5 13 L17.5 13 L15.5 15.5 Z" fill="#fff"/></svg>
<svg class="a" style="left:769px;top:763px;" width="19" height="16" viewBox="0 0 19 16"><g fill="none" stroke="#fff" stroke-width="1.2"><path d="M6 1 L9.5 2.7 V6.2 L6 8 L2.5 6.2 V2.7 Z"/><path d="M3 7.5 L6.5 9.2 V12.7 L3 14.4 L-0.5 12.7 V9.2 Z" transform="translate(1,0)"/><path d="M10 7.5 L13.5 9.2 V12.7 L10 14.4 L6.5 12.7 V9.2 Z" transform="translate(1,0)"/></g><path d="M14.5 13.5 L18.5 13.5 L16.5 16 Z" fill="#fff"/></svg>
<svg class="a" style="left:792px;top:762px;" width="18" height="17" viewBox="0 0 18 17"><g fill="none" stroke="#fff" stroke-width="1.4"><rect x="0.7" y="0.7" width="3" height="14"/><rect x="6.7" y="0.7" width="3" height="14"/></g><path d="M13 0 V14" stroke="#fff" stroke-width="2"/><path d="M14 13.5 L18 13.5 L16 16 Z" fill="#fff"/></svg>
<svg class="a" style="left:815px;top:762px;" width="18" height="17" viewBox="0 0 18 17"><circle cx="8" cy="8" r="4" fill="none" stroke="#fff" stroke-width="2"/><circle cx="8" cy="8" r="6.5" fill="none" stroke="#fff" stroke-width="2" stroke-dasharray="2 1.4"/><path d="M13 14 L17 14 L15 16.5 Z" fill="#fff"/></svg>
<div class="a" style="left:839px;top:765.0px;width:19px;height:1.2999999999999545px;background:#fff;"></div>
<div class="a" style="left:839px;top:770.6px;width:19px;height:1.2999999999999545px;background:#fff;"></div>
<div class="a" style="left:839px;top:776.2px;width:19px;height:1.2999999999999545px;background:#fff;"></div>
<div class="a" style="left:907px;top:100px;width:213px;height:169px;background:#fafafa;"></div>
<div class="a" style="left:907px;top:76px;width:213px;height:25px;background:#00adef;"></div>
<div class="t w" style="left:911px;top:82.5px;font-size:13px;font-weight:bold;">Základní údaje</div>
<div class="a" style="left:1095px;top:78px;width:1px;height:20px;background:#0a8fcc;"></div>
<svg class="a" style="left:1101px;top:85px;" width="14" height="8" viewBox="0 0 14 8"><path d="M0.8 7.2 L7 1 L13.2 7.2" fill="none" stroke="#fff" stroke-width="1.3"/></svg>
<div class="t " style="left:914px;top:107.8px;font-size:12px;color:#2443a0;letter-spacing:-0.25px">Dodavatel:</div>
<div class="t " style="left:973px;top:107.8px;font-size:12px;letter-spacing:-0.14px">Potraviny Albertík; P. Bez...</div>
<div class="a" style="left:914px;top:122px;width:199px;height:1px;background:#e2e2e2;"></div>
<div class="t " style="left:914px;top:129.8px;font-size:12px;color:#2443a0;">Popis:</div>
<div class="a" style="left:914px;top:144px;width:199px;height:1px;background:#e2e2e2;"></div>
<div class="t " style="left:914px;top:151.8px;font-size:12px;color:#2443a0;">Netto:</div>
<div class="t " style="right:14px;top:151.8px;font-size:12px;"><span style="color:#000">0,00</span> <span style="color:#2443a0">Kč</span></div>
<div class="a" style="left:914px;top:166px;width:199px;height:1px;background:#e2e2e2;"></div>
<div class="t " style="left:914px;top:173.8px;font-size:12px;color:#2443a0;">DPH:</div>
<div class="t " style="right:14px;top:173.8px;font-size:12px;"><span style="color:#000">0,00</span> <span style="color:#2443a0">Kč</span></div>
<div class="a" style="left:914px;top:188px;width:199px;height:1px;background:#e2e2e2;"></div>
<div class="t " style="left:914px;top:195.8px;font-size:12px;font-weight:bold;color:#1c4e9e;">Brutto:</div>
<div class="t " style="right:14px;top:195.8px;font-size:12px;font-weight:bold;"><span style="color:#000">0,00</span> <span style="color:#1c4e9e">Kč</span></div>
<div class="a" style="left:914px;top:210px;width:199px;height:1px;background:#e2e2e2;"></div>
<div class="t " style="left:914px;top:217.8px;font-size:12px;color:#2443a0;">Požadováno:</div>
<div class="t " style="right:14px;top:217.8px;font-size:12px;">20.02.2024 00:00:00</div>
<div class="a" style="left:914px;top:232px;width:199px;height:1px;background:#e2e2e2;"></div>
<div class="a" style="left:914px;top:240px;width:23px;height:22px;border:2px solid #cfcfcf;"></div>
<div class="t " style="left:775.5px;width:300px;text-align:center;top:245.1px;font-size:14px;font-weight:bold;color:#cfcfcf;">P</div>
<div class="a" style="left:940px;top:240px;width:23px;height:22px;border:2px solid #cfcfcf;"></div>
<div class="t " style="left:801.5px;width:300px;text-align:center;top:245.1px;font-size:14px;font-weight:bold;color:#cfcfcf;">D</div>
<div class="a" style="left:966px;top:240px;width:23px;height:22px;border:2px solid #cfcfcf;"></div>
<div class="t " style="left:827.5px;width:300px;text-align:center;top:245.1px;font-size:14px;font-weight:bold;color:#cfcfcf;">F</div>
<div class="a" style="left:907px;top:299px;width:213px;height:81px;background:#fafafa;"></div>
<div class="a" style="left:907px;top:275px;width:213px;height:25px;background:#00adef;"></div>
<div class="t w" style="left:911px;top:281.5px;font-size:13px;font-weight:bold;">Zálohy k objednávce</div>
<div class="a" style="left:1095px;top:277px;width:1px;height:20px;background:#0a8fcc;"></div>
<svg class="a" style="left:1101px;top:284px;" width="14" height="8" viewBox="0 0 14 8"><path d="M0.8 7.2 L7 1 L13.2 7.2" fill="none" stroke="#fff" stroke-width="1.3"/></svg>
<svg class="a" style="left:1054px;top:280px;" width="14" height="15" viewBox="0 0 14 15"><g fill="none" stroke="#4cc8f4" stroke-width="1.1"><path d="M0.6 0.6 H7 L10 3.6 V14.4 H0.6 Z"/><rect x="6" y="7" width="7" height="7.4"/></g></svg>
<svg class="a" style="left:1077px;top:280px;" width="15" height="15" viewBox="0 0 15 15"><g fill="none" stroke="#fff" stroke-width="1.1"><path d="M0.6 0.6 H7 L10 3.6 V14.4 H0.6 Z"/><path d="M2.5 5 H7 M2.5 7.5 H5 M2.5 10 H5"/><rect x="6.5" y="7" width="7.5" height="7.4"/><path d="M8.5 9.5 H12 M8.5 12 H12"/></g></svg>
<div class="t " style="left:914px;top:306.8px;font-size:12px;color:#2443a0;">Čerpáno:</div>
<div class="t " style="right:14px;top:306.8px;font-size:12px;"><span style="color:#000">0,00</span> <span style="color:#2443a0">Kč</span></div>
<div class="a" style="left:914px;top:321px;width:199px;height:1px;background:#e2e2e2;"></div>
<div class="t " style="left:914px;top:328.8px;font-size:12px;font-weight:bold;color:#1c4e9e;">Dočerpat:</div>
<div class="t " style="right:14px;top:328.8px;font-size:12px;font-weight:bold;"><span style="color:#000">0,00</span> <span style="color:#1c4e9e">Kč</span></div>
<div class="a" style="left:914px;top:343px;width:199px;height:1px;background:#e2e2e2;"></div>
<div class="a" style="left:907px;top:410px;width:213px;height:81px;background:#fafafa;"></div>
<div class="a" style="left:907px;top:386px;width:213px;height:25px;background:#00adef;"></div>
<div class="t w" style="left:911px;top:392.5px;font-size:13px;font-weight:bold;">Zálohy k dodavateli</div>
<div class="a" style="left:1095px;top:388px;width:1px;height:20px;background:#0a8fcc;"></div>
<svg class="a" style="left:1101px;top:395px;" width="14" height="8" viewBox="0 0 14 8"><path d="M0.8 7.2 L7 1 L13.2 7.2" fill="none" stroke="#fff" stroke-width="1.3"/></svg>
<svg class="a" style="left:1075px;top:390px;" width="19" height="17" viewBox="0 0 19 17"><g fill="none" stroke="#fff" stroke-width="1.2"><circle cx="7" cy="5" r="3.8"/><path d="M0.6 15 Q2 9 7 9 Q9.5 9 11 10.5"/><rect x="11" y="8.5" width="6.5" height="8"/><path d="M12.8 11 H15.5 M12.8 13.5 H15.5"/></g></svg>
<div class="t " style="left:914px;top:417.8px;font-size:12px;color:#2443a0;">Čerpáno:</div>
<div class="t " style="right:14px;top:417.8px;font-size:12px;"><span style="color:#000">10 050,00</span> <span style="color:#2443a0">Kč</span></div>
<div class="a" style="left:914px;top:432px;width:199px;height:1px;background:#e2e2e2;"></div>
<div class="t " style="left:914px;top:439.8px;font-size:12px;font-weight:bold;color:#1c4e9e;">Dočerpat:</div>
<div class="t " style="right:14px;top:439.8px;font-size:12px;font-weight:bold;"><span style="color:#000">16 000,00</span> <span style="color:#1c4e9e">Kč</span></div>
<div class="a" style="left:914px;top:454px;width:199px;height:1px;background:#e2e2e2;"></div>
<svg class="a" style="left:917px;top:462px;" width="21" height="22" viewBox="0 0 21 22"><rect x="0.9" y="0.9" width="15.4" height="16.6" fill="#fff" stroke="#111" stroke-width="1.8"/><path d="M3 5 H10 M12 5 H14 M3 8 H10 M12 8 H14 M3 11 H5" stroke="#111" stroke-width="1.3"/><ellipse cx="14.2" cy="17.8" rx="5.6" ry="2.7" fill="#f7b81e"/><ellipse cx="14.2" cy="16.3" rx="5.6" ry="2.4" fill="#ffd83a"/><ellipse cx="14.2" cy="13.9" rx="5.6" ry="2.5" fill="#f9c42a"/><ellipse cx="14.2" cy="13.4" rx="5.2" ry="2" fill="#ffe14a"/></svg>
<div class="a" style="left:907px;top:521px;width:213px;height:52px;background:#fafafa;"></div>
<div class="a" style="left:907px;top:497px;width:213px;height:25px;background:#00adef;"></div>
<div class="t w" style="left:911px;top:503.5px;font-size:13px;font-weight:bold;">Ostatní údaje</div>
<div class="a" style="left:1095px;top:499px;width:1px;height:20px;background:#0a8fcc;"></div>
<svg class="a" style="left:1101px;top:506px;" width="14" height="8" viewBox="0 0 14 8"><path d="M0.8 7.2 L7 1 L13.2 7.2" fill="none" stroke="#fff" stroke-width="1.3"/></svg>
<div class="t " style="left:914px;top:528.8px;font-size:12px;color:#2443a0;">Vytvořil:</div>
<div class="t " style="right:14px;top:528.8px;font-size:12px;">K2 <span style="color:#1c4e9e">20.02.2024 10:14:30</span></div>
<div class="a" style="left:914px;top:543px;width:199px;height:1px;background:#e2e2e2;"></div>
<div class="t " style="left:914px;top:550.8px;font-size:12px;color:#2443a0;">Změnil:</div>
<div class="t " style="right:14px;top:550.8px;font-size:12px;">K2 <span style="color:#1c4e9e">20.02.2024 10:14:30</span></div>
<div class="a" style="left:914px;top:565px;width:199px;height:1px;background:#e2e2e2;"></div>
<div class="a" style="left:907px;top:604px;width:213px;height:150px;background:#fafafa;"></div>
<div class="a" style="left:907px;top:580px;width:213px;height:25px;background:#00adef;"></div>
<div class="t w" style="left:911px;top:586.5px;font-size:13px;font-weight:bold;">Doklady přenesené mezi fir...</div>
<div class="a" style="left:1095px;top:582px;width:1px;height:20px;background:#0a8fcc;"></div>
<svg class="a" style="left:1101px;top:589px;" width="14" height="8" viewBox="0 0 14 8"><path d="M0.8 7.2 L7 1 L13.2 7.2" fill="none" stroke="#fff" stroke-width="1.3"/></svg>
<div class="a" style="left:914px;top:610px;width:199px;height:137px;background:#fafafa;border:1px solid #d4d4d4;"></div>
<div class="a" style="left:915px;top:611px;width:195px;height:20px;background:#f0f0f0;"></div>
<div class="a" style="left:915px;top:631px;width:195px;height:1px;background:#d8d8d8;"></div>
<div class="a" style="left:1110px;top:611px;width:1px;height:21px;background:#d8d8d8;"></div>
<div class="a" style="left:979px;top:611px;width:1px;height:20px;background:#d8d8d8;"></div>
<div class="a" style="left:1044px;top:611px;width:1px;height:20px;background:#d8d8d8;"></div>
<div class="t lb" style="left:920px;top:614.8px;font-size:12px;">Firma</div>
<div class="t lb" style="left:986px;top:614.8px;font-size:12px;">Typ</div>
<div class="t lb" style="left:1050px;top:614.8px;font-size:12px;">Doklad</div>
<div class="a" style="left:915px;top:679px;width:197px;height:21px;background:#cdeefb;"></div>
<div class="t " style="left:863.0px;width:300px;text-align:center;top:683.8px;font-size:12px;">Žádné údaje</div>
<div class="a" style="left:907px;top:782px;width:213px;height:50px;background:#fafafa;"></div>
<div class="a" style="left:907px;top:758px;width:213px;height:25px;background:#00adef;"></div>
<div class="t w" style="left:911px;top:764.5px;font-size:13px;font-weight:bold;">Nastavení</div>
<div class="a" style="left:1095px;top:760px;width:1px;height:20px;background:#0a8fcc;"></div>
<svg class="a" style="left:1101px;top:767px;" width="14" height="8" viewBox="0 0 14 8"><path d="M0.8 7.2 L7 1 L13.2 7.2" fill="none" stroke="#fff" stroke-width="1.3"/></svg>
<div class="t lb" style="left:922px;top:788.8px;font-size:12px;">Období</div>
<div class="a" style="left:914px;top:803px;width:97px;height:23px;background:#fffee4;border:1px solid #0fa4e5;"></div>
<div class="t " style="left:917px;top:808.8px;font-size:12px;">2024</div>
<svg class="a" style="left:994px;top:810px;" width="12" height="10" viewBox="0 0 12 10"><g fill="#1f5aa8"><rect x="0" y="0" width="3" height="3"/><rect x="4" y="0" width="3" height="3"/><rect x="8" y="0" width="3" height="3"/></g><g fill="#9cb8dc"><rect x="1" y="1" width="1" height="1"/><rect x="5" y="1" width="1" height="1"/><rect x="9" y="1" width="1" height="1"/></g><path d="M0.5 4.6 L5.5 9.2 L10.5 4.6" fill="none" stroke="#2a62b0" stroke-width="1.15"/></svg>
<div class="t lb" style="left:1025px;top:788.8px;font-size:12px;">Sklad</div>
<div class="a" style="left:1017px;top:803px;width:96px;height:23px;background:#fffee4;border:1px solid #0fa4e5;"></div>
<svg class="a" style="left:1096px;top:810px;" width="12" height="10" viewBox="0 0 12 10"><g fill="#1f5aa8"><rect x="0" y="0" width="3" height="3"/><rect x="4" y="0" width="3" height="3"/><rect x="8" y="0" width="3" height="3"/></g><g fill="#9cb8dc"><rect x="1" y="1" width="1" height="1"/><rect x="5" y="1" width="1" height="1"/><rect x="9" y="1" width="1" height="1"/></g><path d="M0.5 4.6 L5.5 9.2 L10.5 4.6" fill="none" stroke="#2a62b0" stroke-width="1.15"/></svg>
</body></html>
